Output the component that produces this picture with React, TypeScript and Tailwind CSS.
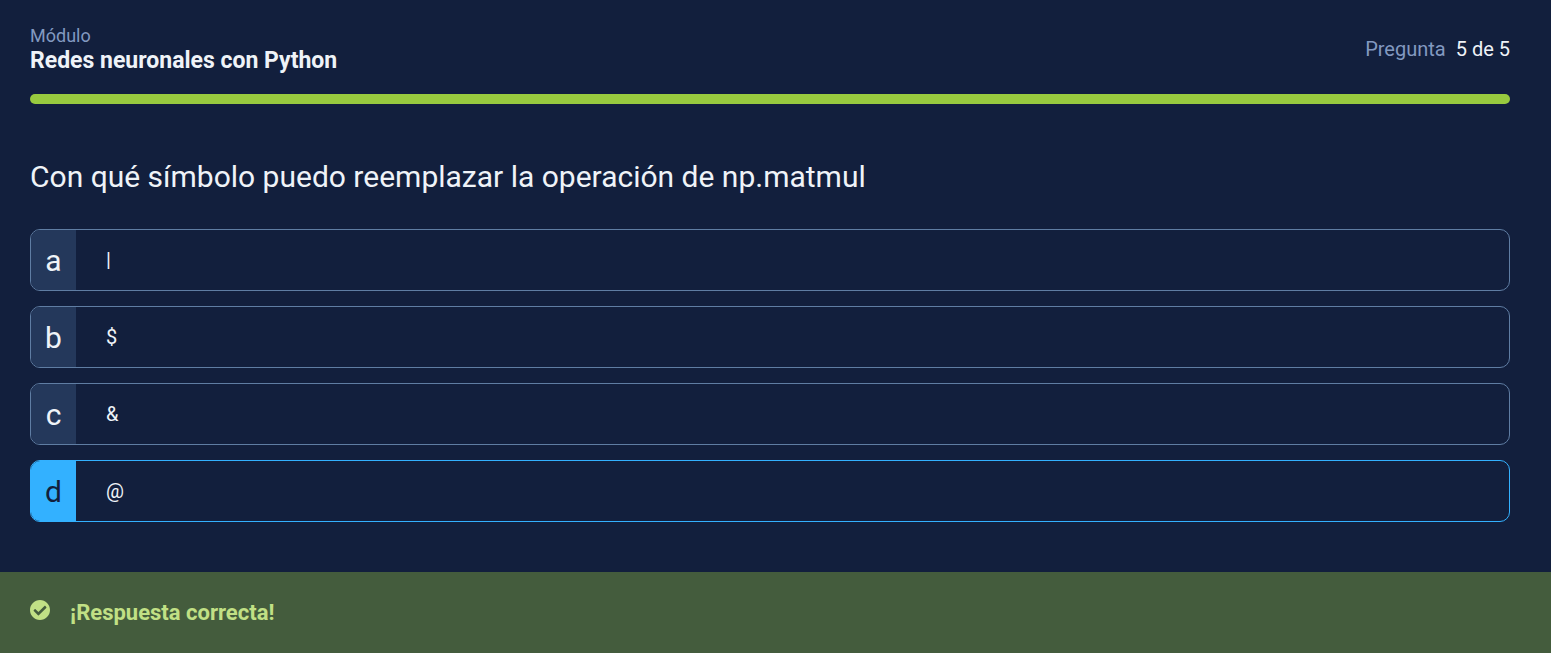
const options = [
  { key: "a", text: "|" },
  { key: "b", text: "$" },
  { key: "c", text: "&" },
  { key: "d", text: "@", selected: true },
];

export default function App() {
  return (
    <div className="flex min-h-screen flex-col bg-[#121f3d] font-['Roboto',sans-serif] text-[#eff3f8]">
      <main className="flex-1 pr-[41px] pb-[50px] pl-[30px]">
        <header className="flex items-center justify-between pt-6">
          <div>
            <p className="text-lg leading-6 text-[#8299c0]">Módulo</p>
            <h1 className="text-[23px] leading-[26px] font-bold">Redes neuronales con Python</h1>
          </div>
          <p className="flex gap-[10px] text-xl leading-6">
            <span className="text-[#8299c0]">Pregunta</span>
            <span>5 de 5</span>
          </p>
        </header>
        <div
          role="progressbar"
          aria-label="Progreso"
          aria-valuenow={5}
          aria-valuemin={0}
          aria-valuemax={5}
          className="mt-5 h-[10px] rounded-full bg-[#98ca3f]"
        />
        <h2 className="mt-[55px] text-[30px] leading-9">
          Con qué símbolo puedo reemplazar la operación de np.matmul
        </h2>
        <div className="mt-[34px] flex flex-col gap-[15px]">
          {options.map((o) => (
            <button
              key={o.key}
              type="button"
              aria-pressed={!!o.selected}
              className={`flex h-[62px] w-full overflow-hidden rounded-[10px] border text-left ${
                o.selected ? "border-[#33b1ff]" : "border-[#5f7da3]"
              }`}
            >
              <span
                className={`flex h-full w-[45px] items-center justify-center pt-[2px] text-[30px] leading-9 ${
                  o.selected ? "bg-[#33b1ff] text-[#121f3d]" : "bg-[#24385b]"
                }`}
              >
                {o.key}
              </span>
              <span className="flex h-full items-center pl-[30px] text-xl">{o.text}</span>
            </button>
          ))}
        </div>
      </main>
      <footer className="flex h-[81px] items-start gap-5 bg-[#445c3d] px-[30px] pt-7 text-[#c1e085]">
        <svg viewBox="8 8 496 496" className="size-5" fill="currentColor" aria-hidden="true">
          <path d="M504 256c0 137-111 248-248 248S8 393 8 256 119 8 256 8s248 111 248 248zM227.300 387.300l184-184c6.200-6.200 6.200-16.400 0-22.600l-22.600-22.600c-6.200-6.200-16.400-6.200-22.600 0L216 308.100l-70.100-70.100c-6.200-6.200-16.400-6.200-22.600 0l-22.600 22.600c-6.200 6.200-6.200 16.400 0 22.600l104 104c6.200 6.200 16.400 6.200 22.600 0z" />
        </svg>
        <p className="text-[22px] leading-[26px] font-bold">¡Respuesta correcta!</p>
      </footer>
    </div>
  );
}
